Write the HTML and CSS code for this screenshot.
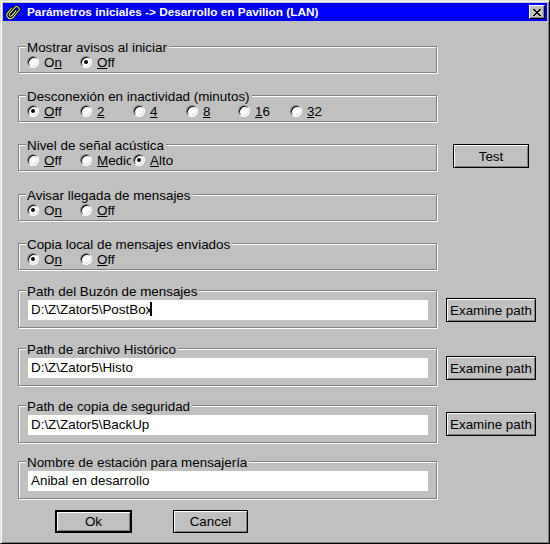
FILE: index.html
```html
<!DOCTYPE html>
<html lang="es">
<head>
  <meta charset="UTF-8" />
  <title>Parámetros iniciales</title>
  <link rel="stylesheet" href="styles.css">
</head>
<body>
  <div class="window">
    <div class="titlebar">
      <svg class="app-icon" width="16" height="16" viewBox="0 0 16 16">
        <g transform="rotate(40 8 8)" fill="none" stroke-linecap="round">
          <path d="M9.5 5 V11.5 A1.5 1.5 0 0 1 6.5 11.5 V3.5 A2.5 2.5 0 0 1 11.5 3.5 V12 A3.5 3.5 0 0 1 4.5 12 V6" stroke="#000" stroke-width="2.6"/>
          <path d="M9.5 5 V11.5 A1.5 1.5 0 0 1 6.5 11.5 V3.5 A2.5 2.5 0 0 1 11.5 3.5 V12 A3.5 3.5 0 0 1 4.5 12 V6" stroke="#e0ff80" stroke-width="1"/>
        </g>
      </svg>
      <span class="title">Parámetros iniciales -&gt; Desarrollo en Pavilion (LAN)</span>
      <div class="close-btn">
        <svg width="8" height="7" viewBox="0 0 8 7"><path d="M0 0 L7 7 M1 0 L8 7 M7 0 L0 7 M8 0 L1 7" stroke="#000" stroke-width="1"/></svg>
      </div>
    </div>

    <div class="content">
      <div class="row first">
        <div class="group">
          <div class="legend">Mostrar avisos al iniciar</div>
          <div class="options">
            <div class="opt"><span class="radio"></span>O<u>n</u></div>
            <div class="opt"><span class="radio checked"></span><u>O</u>ff</div>
          </div>
        </div>
      </div>

      <div class="row">
        <div class="group">
          <div class="legend">Desconexión en inactividad (minutos)</div>
          <div class="options">
            <div class="opt"><span class="radio checked"></span><u>O</u>ff</div>
            <div class="opt"><span class="radio"></span><u>2</u></div>
            <div class="opt"><span class="radio"></span><u>4</u></div>
            <div class="opt"><span class="radio"></span><u>8</u></div>
            <div class="opt"><span class="radio"></span><u>1</u>6</div>
            <div class="opt"><span class="radio"></span><u>3</u>2</div>
          </div>
        </div>
      </div>

      <div class="row">
        <div class="group">
          <div class="legend">Nivel de señal acústica</div>
          <div class="options">
            <div class="opt"><span class="radio"></span><u>O</u>ff</div>
            <div class="opt medio"><span class="radio"></span><u>M</u>edio</div>
            <div class="opt"><span class="radio checked"></span><u>A</u>lto</div>
          </div>
        </div>
        <div class="btn test-btn">Test</div>
      </div>

      <div class="row wide">
        <div class="group">
          <div class="legend">Avisar llegada de mensajes</div>
          <div class="options">
            <div class="opt"><span class="radio checked"></span>O<u>n</u></div>
            <div class="opt"><span class="radio"></span><u>O</u>ff</div>
          </div>
        </div>
      </div>

      <div class="row">
        <div class="group">
          <div class="legend">Copia local de mensajes enviados</div>
          <div class="options">
            <div class="opt"><span class="radio checked"></span>O<u>n</u></div>
            <div class="opt"><span class="radio"></span><u>O</u>ff</div>
          </div>
        </div>
      </div>

      <div class="row path-row first-path">
        <div class="group tall">
          <div class="legend">Path del Buzón de mensajes</div>
          <div class="field">D:\Z\Zator5\PostBox<span class="caret"></span></div>
        </div>
        <div class="btn examine-btn">Examine path</div>
      </div>

      <div class="row path-row">
        <div class="group tall">
          <div class="legend">Path de archivo Histórico</div>
          <div class="field">D:\Z\Zator5\Histo</div>
        </div>
        <div class="btn examine-btn">Examine path</div>
      </div>

      <div class="row path-row tight">
        <div class="group tall">
          <div class="legend">Path de copia de seguridad</div>
          <div class="field">D:\Z\Zator5\BackUp</div>
        </div>
        <div class="btn examine-btn up">Examine path</div>
      </div>

      <div class="row path-row tighter">
        <div class="group tall">
          <div class="legend">Nombre de estación para mensajería</div>
          <div class="field">Anibal en desarrollo</div>
        </div>
      </div>

      <div class="actions">
        <div class="btn ok-btn">Ok</div>
        <div class="btn cancel-btn">Cancel</div>
      </div>
    </div>
  </div>
</body>
</html>
```

FILE: styles.css
```css
body {
  margin: 0;
  padding: 0;
  background: #c0c0c0;
  font-family: "Liberation Sans", Arial, sans-serif;
  font-size: 13.4px;
  color: #000;
}
.window {
  width: 550px;
  height: 544px;
  box-sizing: border-box;
  background: #c0c0c0;
  border: 1px solid;
  border-color: #dfdfdf #000 #000 #dfdfdf;
  box-shadow: inset 1px 1px 0 #fff, inset -1px -1px 0 #808080;
  padding: 2px;
  overflow: hidden;
}
.titlebar {
  height: 18px;
  background: #0000ff;
  display: flex;
  align-items: center;
  color: #fff;
}
.app-icon {
  margin-left: 2px;
  flex-shrink: 0;
}
.title {
  margin-left: 6px;
  font-size: 11.8px;
  font-weight: bold;
  line-height: 18px;
  white-space: nowrap;
  flex: 1;
}
.close-btn {
  width: 16px;
  height: 14px;
  box-sizing: border-box;
  margin-right: 2px;
  background: #c0c0c0;
  border: 1px solid;
  border-color: #fff #000 #000 #fff;
  box-shadow: inset -1px -1px 0 #808080;
  display: flex;
  align-items: center;
  justify-content: center;
}
.content {
  padding-left: 15px;
}
.row {
  display: flex;
  align-items: flex-start;
  margin-top: 22px;
}
.row.first {
  margin-top: 25px;
}
.row.wide {
  margin-top: 23px;
}
.row.first-path {
  margin-top: 20px;
}
.path-row {
  margin-top: 20px;
}
.path-row.tight {
  margin-top: 19px;
}
.path-row.tighter {
  margin-top: 18px;
}
.group {
  width: 419px;
  height: 27px;
  box-sizing: border-box;
  border: 1px solid #808080;
  box-shadow: 1px 1px 0 #fff, inset 1px 1px 0 #fff;
  flex-shrink: 0;
}
.group.tall {
  height: 38px;
}
.legend {
  width: fit-content;
  margin: -7px 0 0 7px;
  padding: 0 2px 0 1px;
  background: #c0c0c0;
  line-height: 15px;
  white-space: nowrap;
}
.options {
  display: grid;
  grid-template-columns: 53px 53px 53px 52px 52px auto;
  margin-left: 8px;
  height: 15px;
}
.opt {
  display: flex;
  align-items: center;
  line-height: 15px;
  white-space: nowrap;
  overflow: hidden;
}
.opt.medio {
  width: 51px;
}
.radio {
  position: relative;
  width: 12px;
  height: 12px;
  box-sizing: border-box;
  border-radius: 50%;
  background: #fff;
  border: 1px solid;
  border-color: #808080 #fff #fff #808080;
  box-shadow: inset 1px 1px 0 #000, inset -1px -1px 0 #dfdfdf;
  margin: -1px 5px 0 0;
  flex-shrink: 0;
}
.radio.checked::after {
  content: "";
  position: absolute;
  left: 3px;
  top: 3px;
  width: 4px;
  height: 4px;
  border-radius: 50%;
  background: #000;
}
.field {
  margin: 1px 0 0 9px;
  width: 400px;
  height: 20px;
  box-sizing: border-box;
  padding: 0 3px;
  background: #fff;
  line-height: 20px;
  white-space: nowrap;
}
.caret {
  display: inline-block;
  width: 2px;
  height: 14px;
  margin-left: -2px;
  background: #000;
  vertical-align: -2px;
}
.btn {
  box-sizing: border-box;
  border: 1px solid #000;
  background: #c0c0c0;
  box-shadow: inset 1px 1px 0 #fff, inset -1px -1px 0 #808080;
  display: flex;
  align-items: center;
  justify-content: center;
  white-space: nowrap;
}
.test-btn {
  width: 76px;
  height: 24px;
  margin-left: 16px;
}
.examine-btn {
  width: 90px;
  height: 24px;
  margin: 8px 0 0 9px;
}
.examine-btn.up {
  margin-top: 7px;
}
.actions {
  display: flex;
  margin-top: 11px;
}
.ok-btn {
  width: 77px;
  height: 23px;
  margin-left: 37px;
  border-width: 2px;
}
.cancel-btn {
  width: 75px;
  height: 23px;
  margin-left: 41px;
}
```
